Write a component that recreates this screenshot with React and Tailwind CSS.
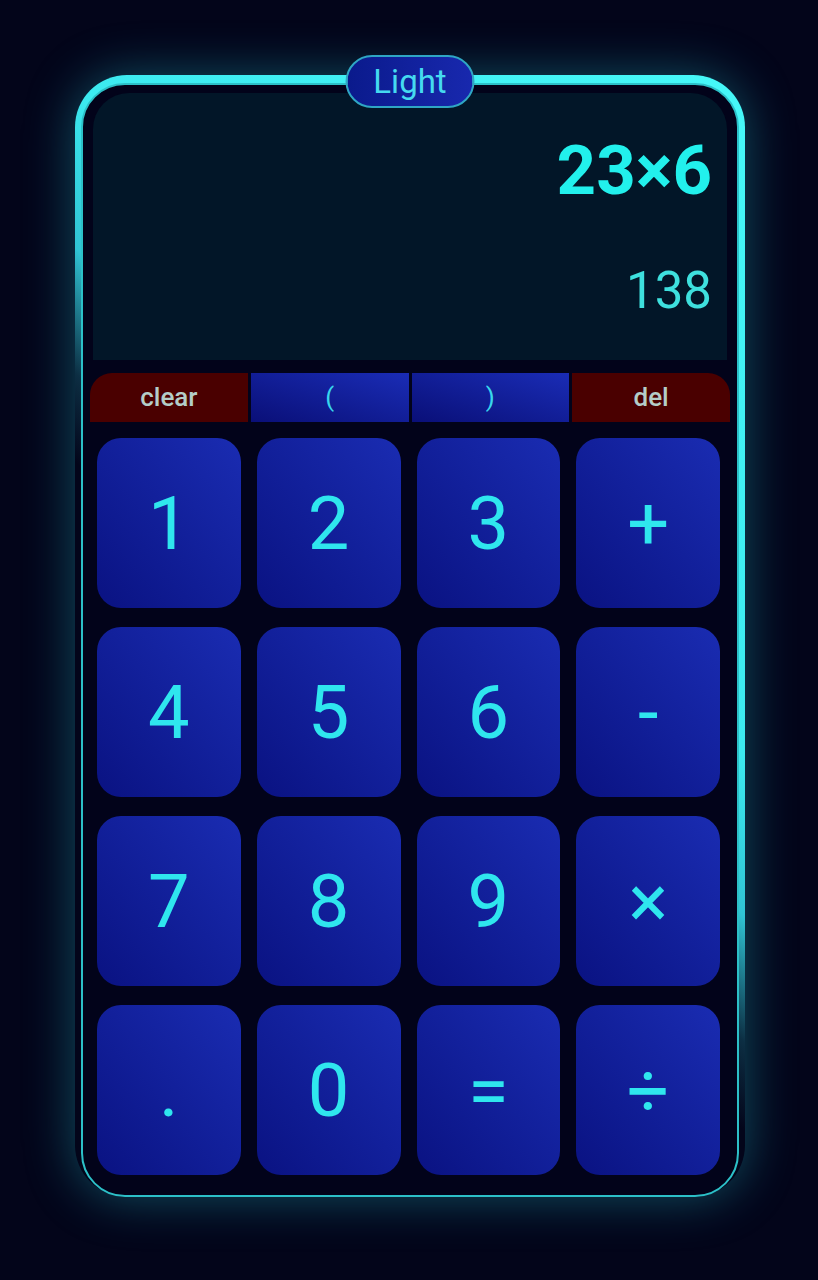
import React from "react";

const keys = ["1", "2", "3", "+", "4", "5", "6", "-", "7", "8", "9", "×", ".", "0", "=", "÷"];

const App = () => {
  return (
    <div className="min-h-screen bg-[#03051a] font-['Roboto',sans-serif] pt-[75px] pl-[75px] pb-[83px]">
      <div className="relative w-[670px] h-[1122px] pt-2">
        {/* glow band behind the card */}
        <div className="absolute inset-0 rounded-[52px] bg-[linear-gradient(225deg,#46f8f8_0%,#3ceaf0_38%,#30c4d4_47%,rgba(40,170,190,0.25)_54%,transparent_59%)] shadow-[0_0_50px_rgba(40,200,215,0.38)]" />
        <div className="relative mx-[6px] h-[1114px] rounded-[44px] border-2 border-[#2cc0c8] bg-[#02031a] px-[10px] pt-2">
          <div className="h-[267px] rounded-t-[36px] bg-[#021628] flex flex-col items-end pr-[15px] pt-[43px]">
            <p className="text-[69px] leading-none font-bold text-[#22f0ec]">23×6</p>
            <p className="mt-[60px] text-[51px] leading-none text-[#3ee0de]">138</p>
          </div>
          <div className="-mx-[3px] mt-[13px] grid grid-cols-4 gap-[3px] h-[49px] text-[26px]">
            <div className="rounded-tl-[22px] bg-[#4a0000] text-[#b4cdc8] flex items-center justify-center font-medium">
              clear
            </div>
            <div className="bg-linear-to-tr from-[#0a0f78] to-[#1a2cb6] text-[#38d6ec] flex items-center justify-center">
              (
            </div>
            <div className="bg-linear-to-tr from-[#0a0f78] to-[#1a2cb6] text-[#38d6ec] flex items-center justify-center">
              )
            </div>
            <div className="rounded-tr-[22px] bg-[#4a0000] text-[#b4cdc8] flex items-center justify-center font-medium">
              del
            </div>
          </div>
          <div className="mt-[16px] pl-[4px] pr-[7px] grid grid-cols-4 gap-x-[16px] gap-y-[19px]">
            {keys.map((k) => (
              <div
                key={k}
                className="h-[170px] rounded-[24px] bg-linear-to-tr from-[#0a1282] to-[#1a2cb2] text-[#2fe6ee] text-[74px] flex items-center justify-center"
              >
                {k}
              </div>
            ))}
          </div>
        </div>
        <div className="absolute left-1/2 -translate-x-1/2 -top-5 w-[129px] h-[53px] rounded-full border-2 border-[#2fa6c4] bg-linear-to-r from-[#0a1a8c] to-[#1828ae] flex items-center justify-center text-[33px] text-[#45daf0]">
          Light
        </div>
      </div>
    </div>
  );
};

export default App;
